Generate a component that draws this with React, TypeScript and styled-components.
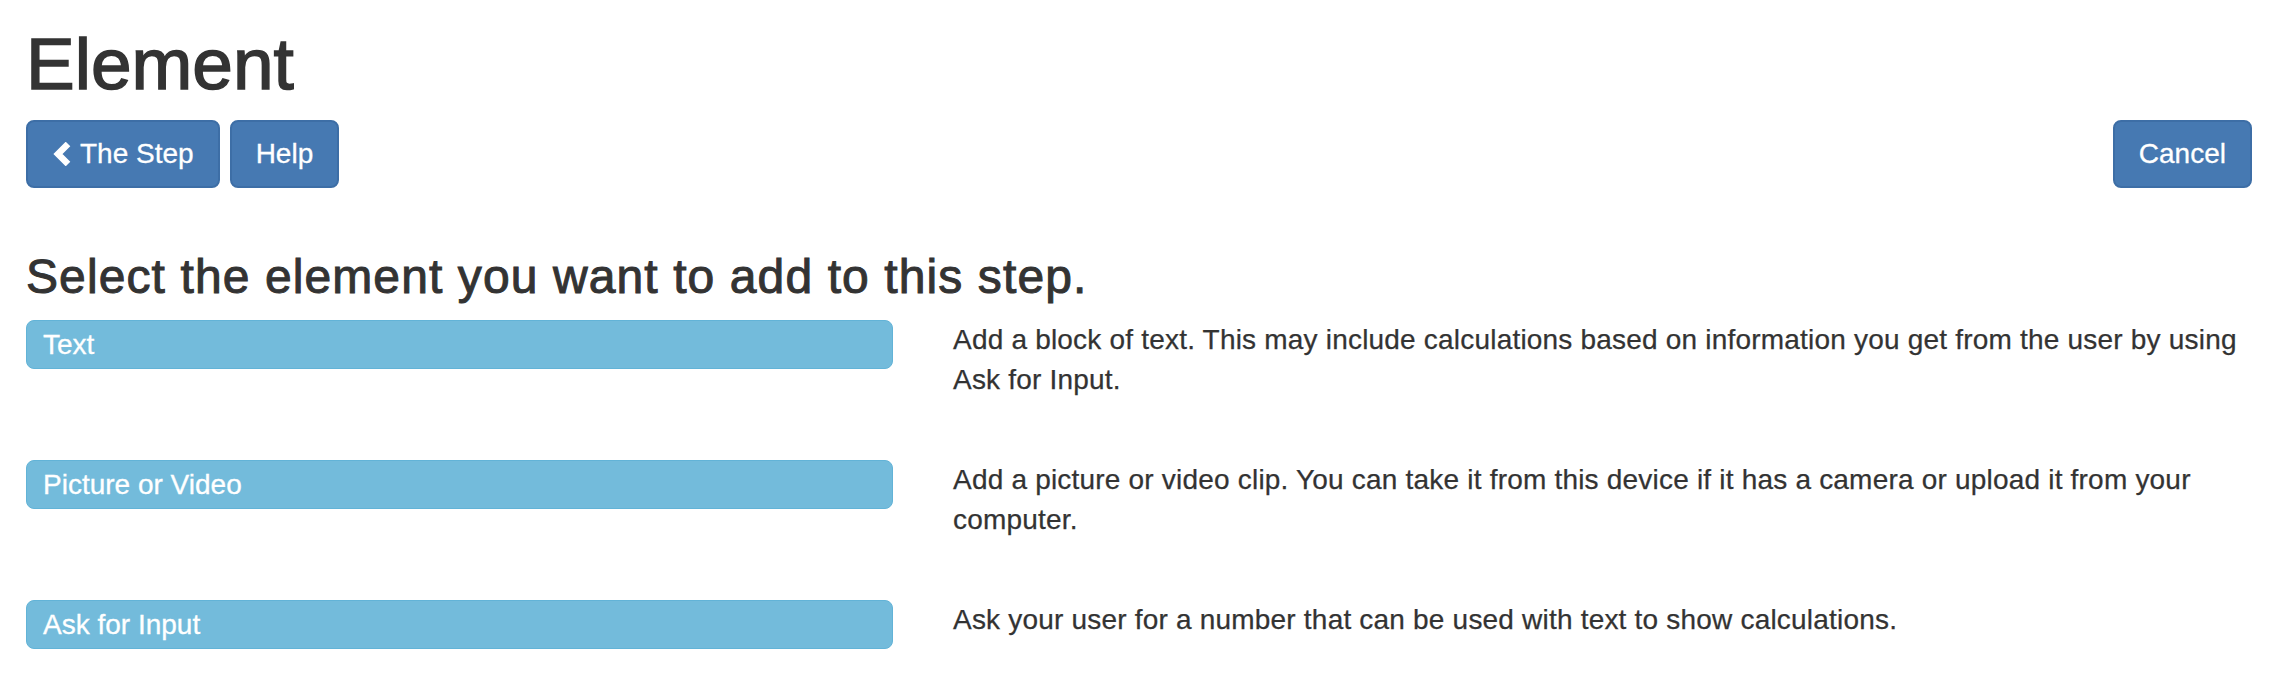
import React from 'react'
import styled, { createGlobalStyle } from 'styled-components'

interface ElementChoice {
  id: string
  label: string
  description: string
}

const choices: ElementChoice[] = [
  {
    id: 'text',
    label: 'Text',
    description: 'Add a block of text. This may include calculations based on information you get from the user by using Ask for Input.'
  },
  {
    id: 'media',
    label: 'Picture or Video',
    description: 'Add a picture or video clip. You can take it from this device if it has a camera or upload it from your computer.'
  },
  {
    id: 'input',
    label: 'Ask for Input',
    description: 'Ask your user for a number that can be used with text to show calculations.'
  }
]

const GlobalStyle = createGlobalStyle`
  body {
    margin: 0;
    background: #fff;
    color: #333;
    font-family: "Liberation Sans", Arial, sans-serif;
  }
`

const Page = styled.div`
  padding: 24px 30px 0 26px;
`

const Title = styled.h1`
  margin: 0;
  font-size: 73px;
  line-height: 80px;
  font-weight: 400;
  color: #333;
  -webkit-text-stroke: 1.5px #333;
`

const Toolbar = styled.div`
  display: flex;
  align-items: center;
  gap: 10px;
  margin-top: 16px;
`

const NavButton = styled.button<{ $push?: boolean }>`
  display: inline-flex;
  align-items: center;
  height: 68px;
  padding: 0 24px;
  margin-left: ${props => props.$push ? 'auto' : '0'};
  border: 2px solid #3d6ea6;
  border-radius: 8px;
  background: #4679b2;
  color: #fff;
  font-family: inherit;
  font-size: 28px;
  line-height: 40px;
  -webkit-text-stroke: 0.3px #fff;
`

const Chevron = styled.svg`
  width: 28px;
  height: 24px;
  flex: none;
`

const Prompt = styled.h3`
  margin: 62px 0 17px;
  font-size: 48px;
  line-height: 53px;
  font-weight: 400;
  letter-spacing: 1.1px;
  color: #333;
  -webkit-text-stroke: 1px #333;
`

const ChoiceList = styled.div`
  display: flex;
  flex-direction: column;
  gap: 60px;
`

const ChoiceRow = styled.div`
  display: grid;
  grid-template-columns: 867px 1fr;
  column-gap: 60px;
  align-items: start;
`

const ChoiceButton = styled.button`
  display: flex;
  align-items: center;
  height: 49px;
  padding: 0 16px;
  border: 1px solid #62b3d7;
  border-radius: 8px;
  background: #73bbdb;
  color: #fff;
  font-family: inherit;
  font-size: 28px;
  text-align: left;
  -webkit-text-stroke: 0.3px #fff;
`

const Description = styled.p`
  margin: 0;
  font-size: 28px;
  line-height: 40px;
  letter-spacing: 0.2px;
  color: #333;
  -webkit-text-stroke: 0.25px #333;
`

const App: React.FC = () => {
  return (
    <Page>
      <GlobalStyle />
      <Title>Element</Title>
      <Toolbar>
        <NavButton>
          <Chevron viewBox='0 0 28 24'>
            <polyline points='16,2 6,12 16,22' fill='none' stroke='#fff' strokeWidth='6.5' strokeLinejoin='miter' />
          </Chevron>
          The Step
        </NavButton>
        <NavButton>Help</NavButton>
        <NavButton $push>Cancel</NavButton>
      </Toolbar>
      <Prompt>Select the element you want to add to this step.</Prompt>
      <ChoiceList>
        {choices.map(c =>
          <ChoiceRow key={c.id}>
            <ChoiceButton>{c.label}</ChoiceButton>
            <Description>{c.description}</Description>
          </ChoiceRow>
        )}
      </ChoiceList>
    </Page>
  )
}

export default App
